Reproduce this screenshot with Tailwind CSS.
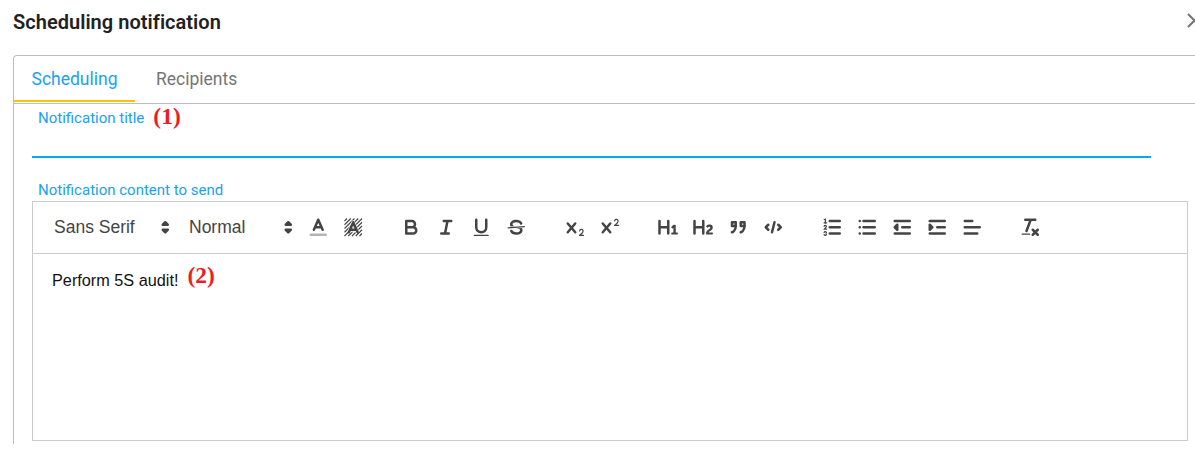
<!DOCTYPE html>
<html lang="en">
<head>
<meta charset="utf-8">
<title>Scheduling notification</title>
<script src="https://cdn.jsdelivr.net/npm/@tailwindcss/browser@4"></script>
</head>
<body class="h-[454px] w-[1195px] overflow-hidden bg-white font-['Roboto',sans-serif]">
<header class="flex h-[55px] items-start justify-between pl-[13px]">
  <h1 class="mt-[8px] whitespace-nowrap text-[20px] leading-[28px] font-semibold tracking-[0.03px] text-[#212121]">Scheduling notification</h1>
  <button class="-mr-[7px] mt-[13px] shrink-0" aria-label="Close"><svg class="block size-[15px]" viewBox="0 0 15 15" fill="none" stroke="#757575" stroke-width="2"><path d="M1 1 14 14M14 1 1 14"/></svg></button>
</header>
<main class="ml-[13px] h-[389px] w-[1190px] rounded-tl-[4px] border-t border-l border-[#bdbdbd]">
  <nav class="flex h-[48px] border-b border-[#bdbdbd] text-[17.5px] leading-[47px]">
    <a class="h-[46px] w-[121px] border-b-2 border-[#ffc107] pl-[17.5px] text-[#19a2f0]">Scheduling</a>
    <a class="pl-[21px] text-[#757575]">Recipients</a>
  </nav>
  <section class="flex h-[54px] w-[1119px] ml-[18px] items-start border-b-2 border-[#03a9f4] pl-[6px]">
    <label class="mt-[4px] text-[15px] leading-[20px] text-[#19a2f0]">Notification title</label>
    <b class="ml-[9px] font-['Liberation_Serif',serif] text-[23.5px] leading-[24px] text-[#ed1c24]">(1)</b>
  </section>
  <div class="ml-[18px] pl-[6px] pt-[22px] h-[43px] text-[15px] leading-[20px] text-[#19a2f0]">Notification content to send</div>
  <section class="ml-[18px] h-[240px] w-[1156px] border border-[#ccc] font-['Liberation_Sans',sans-serif]">
    <div class="flex h-[52px] items-center gap-[23.5px] border-b border-[#ccc] pl-[11px] text-[#444] [&_svg]:block [&_svg]:h-[22.5px] [&_svg]:w-[22.5px] [&_button]:flex [&_button]:w-[35px] [&_button]:justify-center [&_.s]:fill-none [&_.s]:stroke-[#444] [&_.s]:stroke-2 [&_.s]:[stroke-linecap:round] [&_.s]:[stroke-linejoin:round] [&_.f]:fill-[#444] [&_.t]:fill-none [&_.t]:stroke-[#444] [&_.t]:stroke-1 [&_.t]:[stroke-linecap:round]">
      <div class="flex items-center">
        <div class="flex w-[135px] items-center justify-between pl-[10px] pr-[2.5px] text-[17.5px]"><span class="whitespace-nowrap">Sans Serif</span><svg viewBox="0 0 18 18"><path class="s f" d="M7 11 9 13 11 11ZM7 7 9 5 11 7Z"/></svg></div>
        <div class="flex w-[121.5px] items-center justify-between pl-[10px] pr-[1.5px] text-[17.5px]"><span>Normal</span><svg viewBox="0 0 18 18"><path class="s f" d="M7 11 9 13 11 11ZM7 7 9 5 11 7Z"/></svg></div>
        <button aria-label="Text color"><svg viewBox="0 0 18 18"><path class="s opacity-40" d="M3 15H15"/><path class="s" d="M5.5 11 9 3 12.5 11M11.63 9H6.38"/></svg></button>
        <button aria-label="Background color"><svg viewBox="0 0 18 18"><path fill="none" stroke="#444" stroke-width=".85" d="M2 4 4 2M2 7 7 2M2 10 10 2M2 13 13 2M2 16 16 2M5 16 16 5M8 16 16 8M11 16 16 11M14 16 16 14"/><path fill="#fff" stroke="#fff" stroke-width="3.2" stroke-linejoin="round" d="M5.5 13 9 5 12.5 13" opacity=".8"/><path class="s" d="M5.5 13 9 5 12.5 13M11.63 11H6.38"/></svg></button>
      </div>
      <div class="flex">
        <button aria-label="Bold"><svg viewBox="0 0 18 18"><path class="s" d="M5 4H9.5A2.5 2.5 0 0 1 12 6.5 2.5 2.5 0 0 1 9.5 9H5ZM5 9H10.5A2.5 2.5 0 0 1 13 11.5 2.5 2.5 0 0 1 10.5 14H5Z"/></svg></button>
        <button aria-label="Italic"><svg viewBox="0 0 18 18"><path class="s" d="M7 4H13M5 14H11M8 14 10 4"/></svg></button>
        <button aria-label="Underline"><svg viewBox="0 0 18 18"><path class="s" d="M5 3V9a4 4 0 0 0 8 0V3"/><rect class="f" x="3" y="15" width="12" height="1" rx=".5"/></svg></button>
        <button aria-label="Strike"><svg viewBox="0 0 18 18"><path class="t" d="M15.5 8.5 2.5 9.5"/><path class="f" d="M9.007,8C6.542,7.791,6,7.519,6,6.5,6,5.792,7.283,5,9,5c1.571,0,2.765.679,2.969,1.309a1,1,0,0,0,1.9-.617C13.356,4.106,11.354,3,9,3,6.2,3,4,4.538,4,6.5a3.2,3.2,0,0,0,.5,1.843Z"/><path class="f" d="M8.984,10C11.457,10.208,12,10.479,12,11.5c0,0.708-1.283,1.5-3,1.5-1.571,0-2.765-.679-2.969-1.309a1,1,0,1,0-1.9.617C4.644,13.894,6.646,15,9,15c2.8,0,5-1.538,5-3.5a3.2,3.2,0,0,0-.5-1.843Z"/></svg></button>
      </div>
      <div class="flex">
        <button aria-label="Subscript"><svg viewBox="0 0 18 18"><path class="f" d="M15.5,15H13.861a3.858,3.858,0,0,0,1.914-2.975,1.8,1.8,0,0,0-1.6-1.751A1.921,1.921,0,0,0,12.021,11.7a0.5,0.5,0,1,0,.957.291h0a0.914,0.914,0,0,1,1.053-.725,0.81,0.81,0,0,1,.744.762c0,1.076-1.17,1.87-1.94,2.431A1.456,1.456,0,0,0,12,15.5a0.5,0.5,0,0,0,.5.5h3A0.5,0.5,0,0,0,15.5,15Z"/><path class="s" d="M3 6 9 13M9 6 3 13"/></svg></button>
        <button aria-label="Superscript"><svg viewBox="0 0 18 18"><path class="f" d="M15.5,7H13.861a4.015,4.015,0,0,0,1.914-2.975,1.8,1.8,0,0,0-1.6-1.751A1.922,1.922,0,0,0,12.021,3.7a0.5,0.5,0,1,0,.957.291,0.917,0.917,0,0,1,1.053-.725,0.81,0.81,0,0,1,.744.762c0,1.077-1.164,1.925-1.934,2.486A1.423,1.423,0,0,0,12,7.5a0.5,0.5,0,0,0,.5.5h3A0.5,0.5,0,0,0,15.5,7Z"/><path class="s" d="M3 6 9 13M9 6 3 13"/></svg></button>
      </div>
      <div class="flex">
        <button aria-label="Heading 1"><svg viewBox="0 0 18 18"><path class="f" d="M10,4V14a1,1,0,0,1-2,0V10H3v4a1,1,0,0,1-2,0V4A1,1,0,0,1,3,4V8H8V4a1,1,0,0,1,2,0Zm6.06787,9.209H14.98975V7.59863a.54085.54085,0,0,0-.605-.60547h-.62744a1.01119,1.01119,0,0,0-.748.29688L11.645,8.56641a.5435.5435,0,0,0-.022.8584l.28613.30762a.53861.53861,0,0,0,.84717.0332l.09912-.08789a1.2137,1.2137,0,0,0,.2417-.35254h.02246s-.01123.30859-.01123.60547V13.209H12.041a.54085.54085,0,0,0-.605.60547v.43945a.54085.54085,0,0,0,.605.60547h4.02686a.54085.54085,0,0,0,.605-.60547v-.43945A.54085.54085,0,0,0,16.06787,13.209Z"/></svg></button>
        <button aria-label="Heading 2"><svg viewBox="0 0 18 18"><path class="f" d="M16.73975,13.81445v.43945a.54085.54085,0,0,1-.605.60547H11.855a.58392.58392,0,0,1-.64893-.60547V14.0127c0-2.90527,3.39941-3.42187,3.39941-4.55469a.77675.77675,0,0,0-.84717-.78125,1.17684,1.17684,0,0,0-.83594.38477c-.2749.26367-.561.374-.85791.13184l-.4292-.34082c-.30811-.24219-.38525-.51758-.1543-.81445a2.97155,2.97155,0,0,1,2.45361-1.17676,2.45393,2.45393,0,0,1,2.68408,2.40918c0,2.45312-3.1792,2.92676-3.27832,3.93848h2.79443A.54085.54085,0,0,1,16.73975,13.81445ZM9,3A.99974.99974,0,0,0,8,4V8H3V4A1,1,0,0,0,1,4V14a1,1,0,0,0,2,0V10H8v4a1,1,0,0,0,2,0V4A.99974.99974,0,0,0,9,3Z"/></svg></button>
        <button aria-label="Quote"><svg viewBox="0 0 18 18"><path class="s f" d="M4 5H7V8H4ZM11 5H14V8H11Z"/><path class="s f" d="M7,8c0,4.031-3,5-3,5M14,8c0,4.031-3,5-3,5"/></svg></button>
        <button aria-label="Code"><svg viewBox="0 0 18 18"><path class="s" d="M5 7 3 9 5 11M13 7 15 9 13 11M10 5 8 13"/></svg></button>
      </div>
      <div class="flex">
        <button aria-label="Ordered list"><svg viewBox="0 0 18 18"><path class="s" d="M7 4H15M7 9H15M7 14H15"/><path class="t" d="M2.5 5.5H4.5M4.5,10.5h-2c0-.234,1.85-1.076,1.85-2.234A0.959,0.959,0,0,0,2.5,8.156M2.5,14.846a0.959,0.959,0,0,0,1.85-.109A0.7,0.7,0,0,0,3.75,14a0.688,0.688,0,0,0,.6-0.736,0.959,0.959,0,0,0-1.85-.109"/><path class="f" d="M3.5,6A0.5,0.5,0,0,1,3,5.5V3.085l-0.276.138A0.5,0.5,0,0,1,2.053,3c-0.124-.247-0.023-0.324.224-0.447l1-.5A0.5,0.5,0,0,1,4,2.5v3A0.5,0.5,0,0,1,3.5,6Z"/></svg></button>
        <button aria-label="Bullet list"><svg viewBox="0 0 18 18"><path class="s" d="M6 4H15M6 9H15M6 14H15M3 4H3M3 9H3M3 14H3"/></svg></button>
        <button aria-label="Outdent"><svg viewBox="0 0 18 18"><path class="s" d="M3 14H15M3 4H15M9 9H15"/><path class="s f" d="M5 7V11L3 9Z"/></svg></button>
        <button aria-label="Indent"><svg viewBox="0 0 18 18"><path class="s" d="M3 14H15M3 4H15M9 9H15"/><path class="s f" d="M3 7V11L5 9Z"/></svg></button>
        <button aria-label="Align"><svg viewBox="0 0 18 18"><path class="s" d="M3 9H15M3 14H13M3 4H9"/></svg></button>
      </div>
      <div class="flex">
        <button aria-label="Clear formatting"><svg viewBox="0 0 18 18"><path class="s" d="M5 3H13M6 12 9.35 3M11 11 15 15M15 11 11 15"/><rect class="f" x="2" y="14" width="7" height="1" rx=".5"/></svg></button>
      </div>
    </div>
    <div class="flex pl-[19px] pt-[10px]">
      <p class="mt-[5px] text-[16.25px] leading-[23px] whitespace-nowrap text-[#111]">Perform 5S audit!</p>
      <b class="-mt-px ml-[9px] font-['Liberation_Serif',serif] text-[23.5px] leading-[24px] text-[#ed1c24]">(2)</b>
    </div>
  </section>
</main>
</body>
</html>
